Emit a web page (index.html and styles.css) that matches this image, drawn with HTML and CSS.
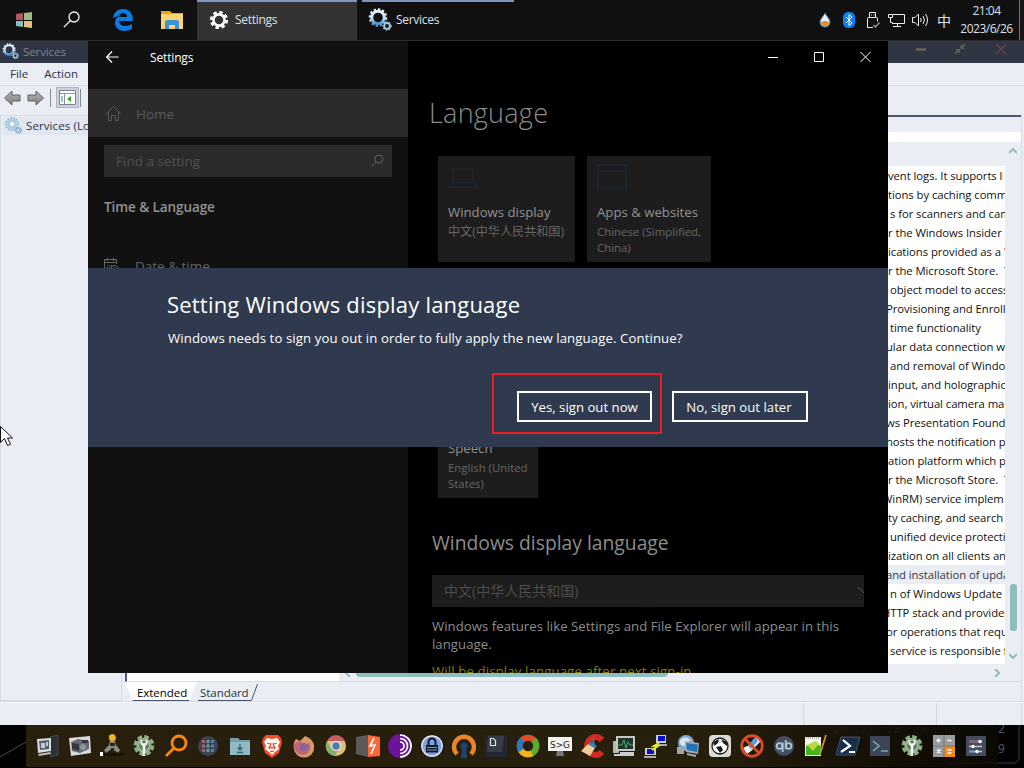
FILE: index.html
```html
<!DOCTYPE html>
<html lang="en">
<head>
<meta charset="utf-8">
<title>Settings</title>
<link rel="stylesheet" href="styles.css">
</head>
<body>
<svg class="defs" width="0" height="0">
  <defs>
    <linearGradient id="steel" x1="0" y1="0" x2="0" y2="1"><stop offset="0" stop-color="#e4f0fa"/><stop offset=".55" stop-color="#c8e4f4"/><stop offset="1" stop-color="#4f94cf"/></linearGradient>
    <linearGradient id="gray" x1="0" y1="0" x2="0" y2="1"><stop offset="0" stop-color="#b8b8b8"/><stop offset="1" stop-color="#7b7b7b"/></linearGradient>
    <symbol id="gears" viewBox="0 0 24 24">
      <circle cx="10" cy="9.500" r="8.100" fill="none" stroke="url(#steel)" stroke-width="2.400" stroke-dasharray="2.300 1.900"/>
      <circle cx="10" cy="9.500" r="6.300" fill="none" stroke="url(#steel)" stroke-width="3"/>
      <circle cx="19" cy="18" r="4" fill="none" stroke="#86b6da" stroke-width="1.600" stroke-dasharray="1.600 1.300"/>
      <circle cx="19" cy="18" r="2.800" fill="none" stroke="#a9cfe8" stroke-width="1.700"/>
    </symbol>
    <symbol id="gearsdark" viewBox="0 0 24 24">
      <circle cx="10" cy="10" r="8.800" fill="none" stroke="#8fb4cf" stroke-width="2.400" stroke-dasharray="2.300 1.900"/>
      <circle cx="10" cy="10" r="6.300" fill="none" stroke="#a9d3ea" stroke-width="3.400"/>
      <circle cx="10" cy="10" r="4.400" fill="#eef3f8" stroke="#8aa9c0" stroke-width="1"/>
      <circle cx="19" cy="19" r="4" fill="none" stroke="#7b9db8" stroke-width="2" stroke-dasharray="1.600 1.300"/>
      <circle cx="19" cy="19" r="2.500" fill="none" stroke="#93b9d4" stroke-width="1.800"/>
    </symbol>
    <symbol id="greengear" viewBox="0 0 24 24">
      <circle cx="12" cy="11.500" r="8.600" fill="none" stroke="#8eaf86" stroke-width="3.600" stroke-dasharray="4.500 2.255"/>
      <circle cx="12" cy="11.500" r="6.200" fill="#5f7a5c" stroke="#93b38b" stroke-width="3"/>
      <path d="M8.500 6v4l2.200 2.300V22h2.600v-9.700L15.500 10V6l-1.800 0v3.200h-3.400V6z" fill="#f4f4f4"/>
    </symbol>
  </defs>
</svg>
<div class="desktop">
  <header class="taskbar">
    <div class="launch"><svg width="16" height="16"><path d="M0 2l7-1v7H0z" fill="#b65562"/><path d="M8 1l8-1v8H8z" fill="#9fb884"/><path d="M0 9h7v6l-7-1z" fill="#86bdbd"/><path d="M8 9h8v7l-8-1z" fill="#e5c282"/></svg></div>
    <div class="launch"><svg width="18" height="18" fill="none" stroke="#f4f4f4" stroke-width="1.300"><circle cx="11" cy="6" r="5"/><path d="M7.500 9.500L1 16"/></svg></div>
    <div class="launch edge"><svg width="22" height="22"><path d="M1 9C2 3 6 0 11 0c7 0 10 5 10 12H7c0 3 3 5 6 5 2 0 5-1 7-2v5c-2 1.300-5 2-8 2-6 0-9-4-9-8 0-4 2-6 5-8C6 7 3.500 8 1 9zm6-1h8c0-3-2-4-4-4S7 6 7 8z" fill="#0a7be0"/></svg></div>
    <div class="launch files"><svg width="22" height="18"><path d="M0 0h9l2 2h11v15H0z" fill="#f0a20b"/><path d="M0 3h22v15H0z" fill="#fdd472"/><path d="M4 18v-7q0-2 2-2h10q2 0 2 2v7h-4v-4H8v4z" fill="#3b92d4"/></svg></div>
    <div class="task active"><svg width="20" height="20"><circle cx="10" cy="10" r="7.800" fill="none" stroke="#fff" stroke-width="2.600" stroke-dasharray="3.500 2.626"/><circle cx="10" cy="10" r="5.600" fill="none" stroke="#fff" stroke-width="2.600"/></svg><span>Settings</span></div>
    <div class="task open"><svg width="24" height="24"><use href="#gears"/></svg><span>Services</span></div>
    <div class="tray">
      <svg width="12" height="16"><path d="M6 1c2 4 5 6 5 9a5 5 0 0 1-10 0c0-3 3-5 5-9z" fill="#e9eef5" stroke="#3c7ba0"/><path d="M2 10q4-2 8 0a4 4 0 0 1-8 0z" fill="#e48b28"/></svg>
      <svg width="12" height="16"><rect width="12" height="16" rx="5" fill="#0e7ef2"/><path d="M3 5l6 6-3 2.500v-11L9 5l-6 6" fill="none" stroke="#fff"/></svg>
      <svg width="13" height="17" fill="none" stroke="#eee" stroke-width="1"><path d="M2.500 5.500v-5h6v5M.500 15.500v-9q0-1 1-1h8q1 0 1 1v3M.500 15.500H6M4 3h1M6.500 3h1"/><path d="M6.500 13l2 2 4-4.500" stroke="#9b9b9b" stroke-width="1.500"/></svg>
      <svg width="17" height="15" fill="none" stroke="#eee"><path d="M5 1.500h11.500v9H4M9.500 11v2.500M5 13.500h8M.500 1.500h4v3h-4zM2.500 5v4.500h2"/></svg>
      <svg width="17" height="14" fill="none" stroke="#eee"><path d="M.500 4.500h2.500L6.500 1v12L3 9.500H.500zM8.500 5q1.500 2 0 4M11 3q3 4 0 8M13.500 1q4 6 0 12"/></svg>
      <span class="ime">中</span>
    </div>
    <div class="clock"><span>21:04</span><span>2023/6/26</span></div>
    <div class="peek"></div>
  </header>

  <section class="services">
    <div class="svc-title"><svg width="17" height="17"><use href="#gears"/></svg><span>Services</span>
      <svg class="svc-ctl" width="92" height="14"><path d="M0 5.500h10" stroke="#7d7158" stroke-width="2"/><path d="M39 10l4-4M49 0l-4 4" stroke="#586b57" stroke-width="1.500"/><path d="M39.500 5h4.500v4.500zM44.500 .500v4.500h4.500z" fill="#586b57"/><path d="M80 0l10 10M90 0L80 10" stroke="#68404b" stroke-width="1.500"/></svg>
    </div>
    <div class="svc-menu"><span>File</span><span>Action</span></div>
    <div class="svc-tools">
      <svg width="17" height="16"><path d="M.500 8L8 1v4h8v6H8v4z" fill="url(#gray)" stroke="#626262"/></svg>
      <svg width="17" height="16"><path d="M16.500 8L9 1v4H1v6h8v4z" fill="url(#gray)" stroke="#626262"/></svg>
      <i></i>
      <div class="toolbtn"><svg width="17" height="15"><path d="M.500.500h16v14H.500z" fill="#fff" stroke="#7d828d"/><path d="M1 3.500h15M5.500 4v10" stroke="#8c929d"/><path d="M2 7h2M2 9h2M2 11h2" stroke="#3378b9"/><path d="M12 6v6L8 9z" fill="#36a817"/></svg></div>
      <i></i>
    </div>
    <div class="svc-main">
      <div class="svc-tree"><div><svg width="17" height="17"><use href="#gearsdark"/></svg><span>Services (Local)</span></div></div>
      <div class="svc-content">
        <div class="svc-band"></div>
        <div class="svc-white"></div>
        <div class="svc-view">
          <div class="svc-left"></div>
          <div class="svc-listcol">
            <div class="svc-list">
              <p>vent logs. It supports l</p><p>tions by caching comm</p><p class="s1">s for scanners and cam</p><p>r the Windows Insider P</p><p>ications provided as a 'p</p><p>r the Microsoft Store. &nbsp;T</p><p class="s1">object model to access</p><p class="n1">Provisioning and Enroll</p><p class="s1">time functionality</p><p class="n1">ular data connection wi</p><p class="s1">and removal of Window</p><p>input, and holographic</p><p>ion, virtual camera man</p><p class="n1">ws Presentation Founda</p><p class="n1">hosts the notification pl</p><p>ation platform which p</p><p>r the Microsoft Store. &nbsp;T</p><p class="n3">WinRM) service implem</p><p>ty caching, and search</p><p class="s1">unified device protecti</p><p>ization on all clients an</p><p class="sel n1">and installation of upda</p><p class="s1">n of Windows Update</p><p class="n3">HTTP stack and provides</p><p class="n1">or operations that requi</p><p class="s1">service is responsible fo</p>
            </div>
            <div class="hscroll"><svg width="6" height="8"><path d="M5 0L1 4l4 4" fill="none" stroke="#8fbcbc" stroke-width="2"/></svg><b></b><svg class="hright" width="7" height="8"><path d="M1 0l4 4-4 4" fill="none" stroke="#8fbcbc" stroke-width="2"/></svg></div>
          </div>
          <div class="vscroll"><svg width="8" height="6"><path d="M0 5l4-4 4 4" fill="none" stroke="#8fbcbc" stroke-width="2"/></svg><b></b><svg width="8" height="6"><path d="M0 1l4 4 4-4" fill="none" stroke="#8fbcbc" stroke-width="2"/></svg></div>
        </div>
        <div class="svc-tabs"><span class="tab on">Extended</span><span class="tab">Standard</span><svg width="8" height="20"><path d="M.500 18.500L6.500 2" stroke="#4b5770"/></svg></div>
      </div>
    </div>
    <div class="svc-status"><i></i><i></i><i></i></div>
  </section>

  <section class="settings">
    <nav class="side">
      <div class="side-head"><svg width="13" height="12"><path d="M12.500 6H1M6 .500L.700 6 6 11.500" fill="none" stroke="#fff" stroke-width="1.200"/></svg><span>Settings</span></div>
      <div class="home"><svg width="15" height="15"><path d="M.500 7.500l7-7 7 7M2.500 6v8.500h3v-5h4v5h3V6" fill="none" stroke="#595959"/></svg><span>Home</span></div>
      <div class="search"><span>Find a setting</span><svg width="13" height="13"><circle cx="8" cy="5" r="4" fill="none" stroke="#606060"/><path d="M5 8L1 12" stroke="#606060"/></svg></div>
      <h3>Time &amp; Language</h3>
      <div class="date"><svg width="15" height="16" fill="none" stroke="#666"><path d="M6 13.500H.500v-12h12V6M.500 4.500h12M3.500 0v3M9.500 0v3"/><path d="M3 7.500h8M3 9.500h5M3 11.500h3" stroke-dasharray="1 1"/><circle cx="10.500" cy="11.500" r="4"/><path d="M10.500 9v3h2"/></svg><span>Date &amp; time</span></div>
    </nav>
    <main class="pane">
      <div class="win-ctl"><svg width="92" height="12" fill="none" stroke="#fff"><path d="M0 6.500h10M46.500 1.500h9v9h-9z"/></svg><svg width="11" height="12"><path d="M.500 1l10 10M10.500 1l-10 10" stroke="#fff"/></svg></div>
      <h1>Language</h1>
      <div class="cards">
        <div class="card wide"><svg width="30" height="26" fill="none" stroke="#1c2430" stroke-width="2"><path d="M5 5h20v13H5zM4 18l-3 5h28l-3-5"/></svg><b>Windows display</b><span>中文(中华人民共和国)</span></div>
        <div class="card"><svg width="30" height="26" fill="none" stroke="#1c2430" stroke-width="2"><path d="M1 1h28v23H1zM1 7h28"/></svg><b>Apps &amp; websites</b><span>Chinese (Simplified,<br>China)</span></div>
      </div>
      <div class="card speech"><b>Speech</b><span>English (United<br>States)</span></div>
      <h2>Windows display language</h2>
      <div class="combo"><span>中文(中华人民共和国)</span><svg width="6" height="8"><path d="M0 1l6 6" stroke="#5a5a5a"/></svg></div>
      <p class="desc">Windows features like Settings and File Explorer will appear in this<br>language.</p>
      <p class="note">Will be display language after next sign-in</p>
    </main>
    <div class="dialog">
      <h2>Setting Windows display language</h2>
      <p>Windows needs to sign you out in order to fully apply the new language. Continue?</p>
      <div class="actions"><div class="mark"><button class="yes">Yes, sign out now</button></div><button>No, sign out later</button></div>
    </div>
  </section>

  <footer class="dockrow">
    <svg class="wall" width="1024" height="43"><path d="M0 32L26 17" stroke="#4f4740"/><path d="M948 38h65q6 0 6-6V0" fill="none" stroke="#3a3a3a"/><g fill="#2b291c" font-family="Noto Sans" font-size="12"><text x="834" y="8">26</text><text x="860" y="8">27</text><text x="887" y="8">28</text><text x="913" y="8">29</text><text x="941" y="8">30</text><text x="998" y="8" fill="#555">2</text><text x="998" y="28" fill="#555">9</text></g></svg>
    <div class="dock">
      <svg viewBox="0 0 24 24"><path d="M14 3l8-2v20l-7 2z" fill="#2c3138" stroke="#454b54"/><path d="M1 5l14-1v13L2 19z" fill="#d8dde0"/><path d="M3 7l10-1v9L4 16z" fill="#57616e"/><path d="M5 9h4v5H5zM10 8h2v4h-2z" fill="#c1cbd7"/><path d="M2 20l12-2 1 2-12 2z" fill="#bbb"/></svg>
      <svg viewBox="0 0 24 24"><path d="M1 4l21-2 1 17-20 3z" fill="#d9dcdc"/><path d="M3 8l7-3 11 2v8l-9 4-8-2z" fill="#646a6d"/><path d="M4 9l7 1v7l-7-2zM14 6h6v3h-6z" fill="#35393d"/><circle cx="15" cy="13" r="3" fill="#8d989e"/></svg>
      <svg viewBox="0 0 24 24"><path d="M9 4Q8 1 12 0q4 0 4 5l-2 2h-4z" fill="#eeb52c"/><path d="M10 7h5l1 4 4 5-2 3-4-3h-4l-4 3-2-3 5-5z" fill="#8b8b83"/><path d="M10 9h5v3h-5zM11 14h3v4h-3z" fill="#222"/><path d="M0 18h3v4H0z" fill="#fff"/><text x="4" y="22" font-family="DejaVu Sans" font-size="5" font-weight="bold" fill="#080808">mputer</text></svg>
      <svg viewBox="0 0 24 24"><use href="#greengear"/></svg>
      <svg viewBox="0 0 24 24" fill="none" stroke="#f8850c" stroke-width="2.800"><circle cx="15" cy="9" r="7"/><path d="M10 14l-8 8"/></svg>
      <svg viewBox="0 0 24 24"><circle cx="12" cy="12" r="10" fill="#3c4352"/><g stroke-width="3"><path d="M6 7.500h3M6 12h3M6 16.500h3" stroke="#b55b70"/><path d="M10.500 7.500h3M10.500 12h3M10.500 16.500h3" stroke="#55a99a"/><path d="M15 7.500h3M15 12h3M15 16.500h3" stroke="#6174bb"/></g></svg>
      <svg viewBox="0 0 24 24"><path d="M2 4h8l2 2h10v15H2z" fill="#6f9eab"/><path d="M2 8h20v13H2z" fill="#91bac5"/><path d="M12 10v6M9.500 13.500l2.500 2.500 2.500-2.500M9 18.500h6" fill="none" stroke="#3d6470" stroke-width="1.500"/></svg>
      <svg viewBox="0 0 24 24"><path d="M6 1h12l3 3 1 4-3 11-7 5-7-5L2 8l1-4z" fill="#f44b22"/><path d="M7 4l5 1 5-1 3 4-2 4 1 3-4 3-3 3-3-3-4-3 1-3-2-4z" fill="#fff"/><path d="M7 9l3 1M17 9l-3 1M11 9l-1 4 2 1 2-1-1-4M8.500 13l1.500 2M15.500 13L14 15M10 18l2-1 2 1" fill="none" stroke="#f44b22" stroke-width="1.300"/></svg>
      <svg viewBox="0 0 24 24"><path d="M4 5l4 2 5-5c6 2 10 7 9 12a10 9 0 0 1-20 1C1 10 2 8 4 5z" fill="#d79a67"/><path d="M2 11c2-4 6-4 8-3 1 5 6 3 7 0 3 7 0 12-6 13-6-1-9-5-9-10z" fill="#bc6478"/><circle cx="12" cy="13" r="4" fill="#8a639b"/></svg>
      <svg viewBox="0 0 24 24"><circle cx="12" cy="12" r="10" fill="#dec17a"/><path d="M3 7a10 10 0 0 1 18 0h-9z" fill="#c55f5f"/><path d="M3 7a10 10 0 0 0 8 15l4-8-8 0z" fill="#83b071"/><circle cx="12" cy="12" r="5" fill="#eee"/><circle cx="12" cy="12" r="3.800" fill="#4d7dad"/></svg>
      <svg viewBox="0 0 24 24"><path d="M0 3l12-2v22L0 20z" fill="#5b5a58"/><path d="M12 1l12 2v19l-12 1z" fill="#ff6635"/><path d="M18 4l-4 8 5-1-4 9" fill="none" stroke="#fff" stroke-width="1.700"/></svg>
      <svg viewBox="0 0 24 24"><circle cx="12" cy="12" r="12" fill="#6a1499"/><path d="M12 8a4 4 0 0 1 0 8M12 4.500a7.500 7.500 0 0 1 0 15M12 1a11 11 0 0 1 0 22" fill="none" stroke="#fff" stroke-width="1.700"/></svg>
      <svg viewBox="0 0 24 24"><circle cx="12" cy="12" r="11" fill="#7f9fe0" stroke="#111"/><circle cx="12" cy="12" r="10.200" fill="none" stroke="#eee" stroke-width="1.300"/><path d="M6 11h12v7.500H6z" fill="#11192d"/><path d="M8.500 11V8a3.500 3.500 0 0 1 7 0v3" fill="none" stroke="#11192d" stroke-width="2"/><path d="M7 13.500h10M7 16h10" stroke="#8799bd"/></svg>
      <svg viewBox="0 0 24 24"><path d="M5 20a10 10 0 1 1 14 0" fill="none" stroke="#ed842b" stroke-width="4.500"/><circle cx="12" cy="12" r="3.500" fill="#1b456d"/><path d="M10 13h4l1 11H9z" fill="#1b456d"/></svg>
      <svg viewBox="0 0 24 24"><path d="M1 1h22v22H1z" fill="#222831"/><path d="M4 2h16l-2 16H3z" fill="#363b46"/><path d="M6.500 4.500h3l2 2v5h-5z" fill="none" stroke="#e1e1e1" stroke-width="1.200"/></svg>
      <svg viewBox="0 0 24 24" fill="none" stroke-width="6"><circle cx="12" cy="12" r="8.300" stroke="#e24a28"/><path d="M17.500 5.800A8.300 8.300 0 0 1 14 20" stroke="#59af2b"/><path d="M16 19.300A8.300 8.300 0 0 1 4.500 15.500" stroke="#f3b51a"/><path d="M5 16.500A8.300 8.300 0 0 1 6.500 5.800" stroke="#2877c1"/></svg>
      <svg viewBox="0 0 24 24"><path d="M9 17h6l1 5H8z" fill="#747779"/><path d="M0 3h24v14H0z" fill="#f2f2f2"/><text x="2" y="13.500" font-family="DejaVu Sans" font-size="9" textLength="20" lengthAdjust="spacingAndGlyphs" fill="#222">S&gt;G</text></svg>
      <svg viewBox="0 0 24 24"><path d="M22 6A8.500 9 0 1 0 22 18" fill="none" stroke="#d32924" stroke-width="6"/><path d="M13 1l2 10-3 2z" fill="#447caa"/><path d="M8 10l7 4-5 8-9-5z" fill="#f1cb92"/><path d="M9 9l7 4" stroke="#3f80b6" stroke-width="3"/></svg>
      <svg viewBox="0 0 24 24"><path d="M1 7h6v12H1z" fill="#b4b8b3"/><path d="M4 2h19v15H4z" fill="#c4c8c2"/><path d="M6 4h15v11H6z" fill="#24332b"/><path d="M6 11h4l2-5 2 8 2-6 2 3h3" fill="none" stroke="#42ad64"/><path d="M8 19h13v2H2" fill="none" stroke="#ccc" stroke-width="2"/></svg>
      <svg viewBox="0 0 24 24"><path d="M12 1h10v8H12zM1 14h11v7H1z" fill="#ccc"/><path d="M14 2h7v5h-7zM3 15h7v5H3z" fill="#0710c8"/><path d="M11 10h12v2H11zM0 22h12v2H0z" fill="#aaa"/><path d="M15 9l-5 3h4l-6 4" fill="none" stroke="#eded13" stroke-width="2"/></svg>
      <svg viewBox="0 0 24 24"><circle cx="10" cy="9" r="8" fill="#83a6d0"/><path d="M4 6q6-6 11 1-5 0-5 5-7 1-6-6z" fill="#d7e3ed"/><path d="M9 7l14 2-1 11-12-2z" fill="#a3abb4"/><path d="M10 9l12 1.500-1 7.500-10-2z" fill="#2475b7"/><path d="M1 13h7v7H1z" fill="#9fa6ab"/><path d="M11 20l9 2" stroke="#aaa" stroke-width="2"/></svg>
      <svg viewBox="0 0 24 24"><rect x="1" y="1" width="22" height="22" rx="4" fill="#dadad6"/><circle cx="12" cy="12" r="8" fill="#fff" stroke="#1a1d1a" stroke-width="1.300"/><path d="M5 8l6-3-1 4-4 3zM13 5l6 3v4l-4-3zM8 13l5-1 2 4-3 3z" fill="#18201a"/></svg>
      <svg viewBox="0 0 24 24"><path d="M6 14l5 3 10-10-5-4zM3 14l4 6 4-3-4-5z" fill="#eef4fa"/><path d="M15 3l3 4-7 8-3-3z" fill="#5b9ddb"/><circle cx="12" cy="12" r="10.300" fill="none" stroke="#df4b24" stroke-width="2.700"/><path d="M5 5l14 14" stroke="#df4b24" stroke-width="2.700"/></svg>
      <svg viewBox="0 0 24 24"><circle cx="12" cy="12" r="10" fill="#454e65"/><g fill="none" stroke="#a8cad1" stroke-width="1.800"><circle cx="7.500" cy="12" r="2.800"/><path d="M10.700 8.500V18M13.700 6v9"/><circle cx="16.600" cy="12" r="2.800"/></g></svg>
      <svg viewBox="0 0 24 24"><path d="M1 3h16v19L1 22z" fill="#f4f3e8"/><path d="M2 12q8-5 15 0v9H2z" fill="#45b421"/><path d="M3 11l9-4 3 3-6 7z" fill="#b9d943"/><path d="M22 1L16 20" stroke="#d5971e" stroke-width="1.700"/><path d="M2 4h14" stroke="#777" stroke-dasharray="1 1"/></svg>
      <svg viewBox="0 0 24 24"><path d="M5 3h19l-5 18H0z" fill="#172f4a" stroke="#42556d"/><path d="M7 6l7 6-9 6M13 18h6" fill="none" stroke="#fff" stroke-width="2.200"/></svg>
      <svg viewBox="0 0 24 24"><path d="M2 2h20v20H2z" fill="#3d4457"/><path d="M5 7l6 5-6 5M13 17h7" fill="none" stroke="#77acad" stroke-width="1.600"/></svg>
      <svg viewBox="0 0 24 24"><use href="#greengear"/></svg>
      <svg viewBox="0 0 24 24"><path d="M1 1h22v22H1z" fill="#989c9d"/><path d="M12 12h11v11H12z" fill="#f28b19"/><path d="M1 12h22M12 1v22" stroke="#777"/><path d="M6.500 4.500v4M4.500 6.500h4M15.500 6.500h4M5 15.500l3.500 3.500M8.500 15.500L5 19M15.500 16h4M15.500 19h4" stroke="#fff" stroke-width="1.300"/></svg>
      <svg viewBox="0 0 24 24"><path d="M2 2h20v20H2z" fill="#454b61"/><path d="M5 7.500h13M5 12.500h13M5 17.500h13" stroke="#bfc5d0" stroke-width="1.500"/><path d="M5 7.500h9" stroke="#c04d62" stroke-width="1.600"/><path d="M5 17.500h6" stroke="#67a2ca" stroke-width="1.600"/><g fill="#fff"><circle cx="16" cy="7.500" r="1.700"/><circle cx="9" cy="12.500" r="1.700"/><circle cx="13" cy="17.500" r="1.700"/></g></svg>
    </div>
  </footer>
  <svg class="cursor" width="13" height="22"><path d="M.500.500v16l4-4 3 7 3-1.300-3-6.200h5z" fill="#fff" stroke="#111"/></svg>
</div>
</body>
</html>
```
FILE: styles.css
```css
* { box-sizing: border-box; }
body { margin: 0; font-family: "Open Sans", "Noto Sans CJK SC", sans-serif; background: #000; }
h1, h2, h3, p { margin: 0; font-weight: 400; }
svg { display: block; flex: none; }
span, button, h1, h2, p { white-space: nowrap; }
.defs { position: absolute; }
.desktop { position: relative; width: 1024px; height: 768px; overflow: hidden; display: flex; flex-direction: column; }

.taskbar { height: 41px; flex: none; background: #101010; border-bottom: 1px solid #2d2d2d; display: flex; color: #dce2eb; font-size: 12px; }
.launch { width: 48px; display: flex; align-items: center; justify-content: center; }
.launch.edge { width: 54px; }
.launch.files { width: 47px; padding-right: 3px; }
.task { display: flex; align-items: center; gap: 6px; border-top: 2px solid #7e95bb; padding-bottom: 3px; letter-spacing: -.3px; }
.task.active { width: 160px; background: #333; padding-left: 12px; }
.task.open { width: 152px; margin-left: 5px; padding-left: 6px; gap: 4px; }
.tray { margin-left: auto; display: flex; align-items: center; gap: 9px; }
.tray svg:nth-child(2) { margin-left: 3px; }
.tray svg:nth-child(3) { margin-left: 3px; margin-right: -1px; }
.tray svg:nth-child(5) { margin-left: -2px; }
.ime { font: 14px "Noto Sans CJK SC", sans-serif; margin-left: -1px; }
.clock { width: 66px; display: flex; flex-direction: column; align-items: center; line-height: 18px; padding: 2px 0 0 1px; letter-spacing: -.5px; margin-left: 2px; }
.peek { width: 5px; border-left: 1px solid #777; background: #151515; }

.services { height: 684px; flex: none; background: #eaeef4; display: flex; flex-direction: column; font-size: 11px; color: #2c3343; }
.svc-title { height: 22px; background: #2f3542; color: #7d8591; display: flex; align-items: center; gap: 4px; padding: 0 0 2px 2px; font-size: 11.500px; letter-spacing: -.1px; }
.svc-ctl { margin-left: auto; margin-right: 16px; }
.svc-menu { height: 23px; border-bottom: 1px solid #d6dbe4; display: flex; align-items: center; gap: 16px; padding: 0 0 2px 10px; font-size: 11.500px; }
.svc-tools { height: 29px; display: flex; align-items: center; gap: 6px; padding-left: 4px; padding-bottom: 6px; }
.svc-tools i { width: 1px; height: 18px; background: #858991; }
.svc-tools i:last-child { margin-left: -5px; }
.toolbtn { margin-left: -1px; width: 23px; height: 21px; background: #ccd2dd; border: 1px solid #aeb5c1; display: grid; place-items: center; }
.svc-main { height: 587px; flex: none; display: flex; border-bottom: 1px solid #d5dbe5; }
.svc-tree { width: 122px; border: 1px solid #d6dbe2; }
.svc-tree div { display: flex; align-items: center; gap: 4px; margin: 1px 0 0 2px; padding: 0 0 1px 2px; height: 18px; background: #e1e6f0; font-size: 11.500px; letter-spacing: .1px; }
.svc-content { width: 900px; padding-left: 3px; border-right: 1px solid #d6dbe2; display: flex; flex-direction: column; }
.svc-band { height: 17px; flex: none; border-top: 2px solid #4b5770; }
.svc-white { height: 10px; flex: none; background: #fff; }
.svc-view { height: 540px; flex: none; display: flex; border-left: 2px solid #4b5770; border-bottom: 1px solid #d6dbe2; }
.svc-left { width: 212px; background: #fff; }
.svc-listcol { flex: 1; display: flex; flex-direction: column; }
.svc-list { margin-top: 24px; padding: 0 0 4px 549px; background: #fff; width: 666px; overflow: hidden; color: #111; }
.svc-list p { height: 19px; line-height: 19px; font-size: 11.300px; letter-spacing: -.06px; }
.svc-list .s1 { padding-left: 2px; }
.svc-list .n1 { margin-left: -2px; }
.svc-list .n3 { margin-left: -6px; }
.svc-list .sel { background: #eaeef4; color: #2f394c; }
.hscroll { display: flex; align-items: center; flex: 1; padding-left: 6px; gap: 5px; }
.hscroll b { width: 312px; height: 8px; border-radius: 4px; background: #8fbcbc; }
.hright { margin-left: 321px; }
.vscroll { width: 16px; display: flex; flex-direction: column; align-items: center; padding-top: 6px; }
.vscroll b { width: 7px; height: 47px; border-radius: 3px; background: #8fbcbc; margin: 430px 0 22px; }
.svc-tabs { display: flex; height: 19px; flex: none; }
.tab { height: 19px; line-height: 21px; font-size: 11.500px; padding: 0 2px; border-bottom: 1px solid #4b5770; margin-left: 9px; width: 53px; letter-spacing: -.05px; }
.tab.on { width: 72px; margin-left: 0; padding: 0 12px; background: #fff; color: #000; border: 0; clip-path: polygon(0 0, 100% 0, 89% 100%, 11% 100%); box-shadow: inset 0 -1px #4b5770; margin-right: -8px; }
.svc-status { flex: 1; display: flex; justify-content: flex-end; padding-right: 2px; border-top: 1px solid #f5f7fa; }
.svc-status i { width: 133px; border-left: 1px solid #d2d8e2; }
.svc-status i:nth-child(2) { width: 85px; }
.svc-status i:last-child { width: 1px; }

.settings { position: absolute; left: 88px; top: 41px; width: 800px; height: 632px; background: #000; display: flex; overflow: hidden; }
.side { width: 320px; background: #111; color: #8b8b8b; font-size: 13.500px; }
.side-head { height: 48px; display: flex; align-items: center; gap: 31px; padding: 0 0 16px 18px; color: #fff; font-size: 12px; letter-spacing: -.15px; }
.home { height: 48px; background: #2b2b2b; display: flex; align-items: center; gap: 15px; padding: 1px 0 0 18px; color: #595959; }
.search { height: 32px; margin: 8px 16px 0; padding: 0 8px 1px 12px; background: #2b2b2b; color: #505050; display: flex; align-items: center; justify-content: space-between; }
.side h3 { margin: 19px 16px 0; line-height: 22px; font-size: 13.500px; font-weight: 600; letter-spacing: -.08px; color: #929292; }
.date { margin: 37px 16px 0; height: 22px; display: flex; gap: 16px; align-items: center; color: #646464; }
.pane { width: 480px; padding-left: 24px; color: #8c8c8c; }
.win-ctl { height: 32px; padding-left: 336px; display: flex; align-items: center; }
.pane h1 { font-size: 27px; line-height: 36px; letter-spacing: .25px; margin: 22px 0 0 -3px; font-weight: 300; }
.cards { display: flex; gap: 12px; margin: 25px 0 0 6px; height: 106px; }
.card { background: #1d1d1d; width: 124px; padding: 8px 0 0 10px; display: flex; flex-direction: column; }
.card.wide { width: 137px; }
.card b { font-size: 13.200px; font-weight: 400; line-height: 18px; margin-top: 13px; white-space: nowrap; color: #929292; }
.card span { font-size: 11.400px; line-height: 16px; margin-top: 3px; color: #666; }
.card.wide span { font-size: 12.100px; }
.card.speech { margin: 180px 0 0 6px; width: 100px; height: 56px; padding-top: 0; }
.card.speech b { margin-top: -3px; }
.pane h2 { font-size: 19.300px; line-height: 28px; margin-top: 31px; }
.combo { width: 432px; height: 32px; margin-top: 18px; padding: 0 0 3px 12px; background: #1d1d1d; color: #4c4c4c; display: flex; align-items: center; justify-content: space-between; font-size: 14px; }
.desc { margin-top: 10px; font-size: 13.200px; line-height: 18px; letter-spacing: .03px; }
.note { margin-top: 9px; font-size: 13.200px; line-height: 18px; letter-spacing: .13px; color: #857f00; }

.dialog { position: absolute; left: 0; top: 227px; width: 800px; height: 179px; padding: 20px 80px 0 79px; background: #2f3a4e; color: #fff; }
.dialog h2 { font-size: 22px; line-height: 32px; letter-spacing: .2px; }
.dialog p { font-size: 13.200px; line-height: 20px; margin: 8px 0 0 1px; letter-spacing: .1px; }
.actions { display: flex; justify-content: flex-end; gap: 10px; margin-top: 25px; align-items: center; }
.mark { width: 170px; height: 61px; border: 2px solid #ed1c24; padding: 16px 8px 0 23px; }
.actions button { width: 136px; height: 31px; border: 2px solid #fff; background: transparent; color: #fff; font: 13.200px "Open Sans", sans-serif; padding: 1px 2px 0 0; margin-top: 5px; }
.actions .yes { width: 135px; margin-top: 0; padding: 0; }

.dockrow { position: relative; height: 43px; flex: none; padding-left: 26px; background: #020202; }
.wall { position: absolute; left: 0; top: 0; z-index: 1; }
.dock { position: relative; z-index: 2; width: 972px; height: 42px; padding: 0 6px; display: grid; grid-template-columns: repeat(30, 32px); align-items: center; justify-items: center; background: linear-gradient(90deg, #281f0c 0%, #261f0c 70%, #191307cc 88%, #0d0a04cc 100%); }
.dock svg { width: 24px; height: 24px; }
.cursor { position: absolute; left: 0; top: 426px; }
```
